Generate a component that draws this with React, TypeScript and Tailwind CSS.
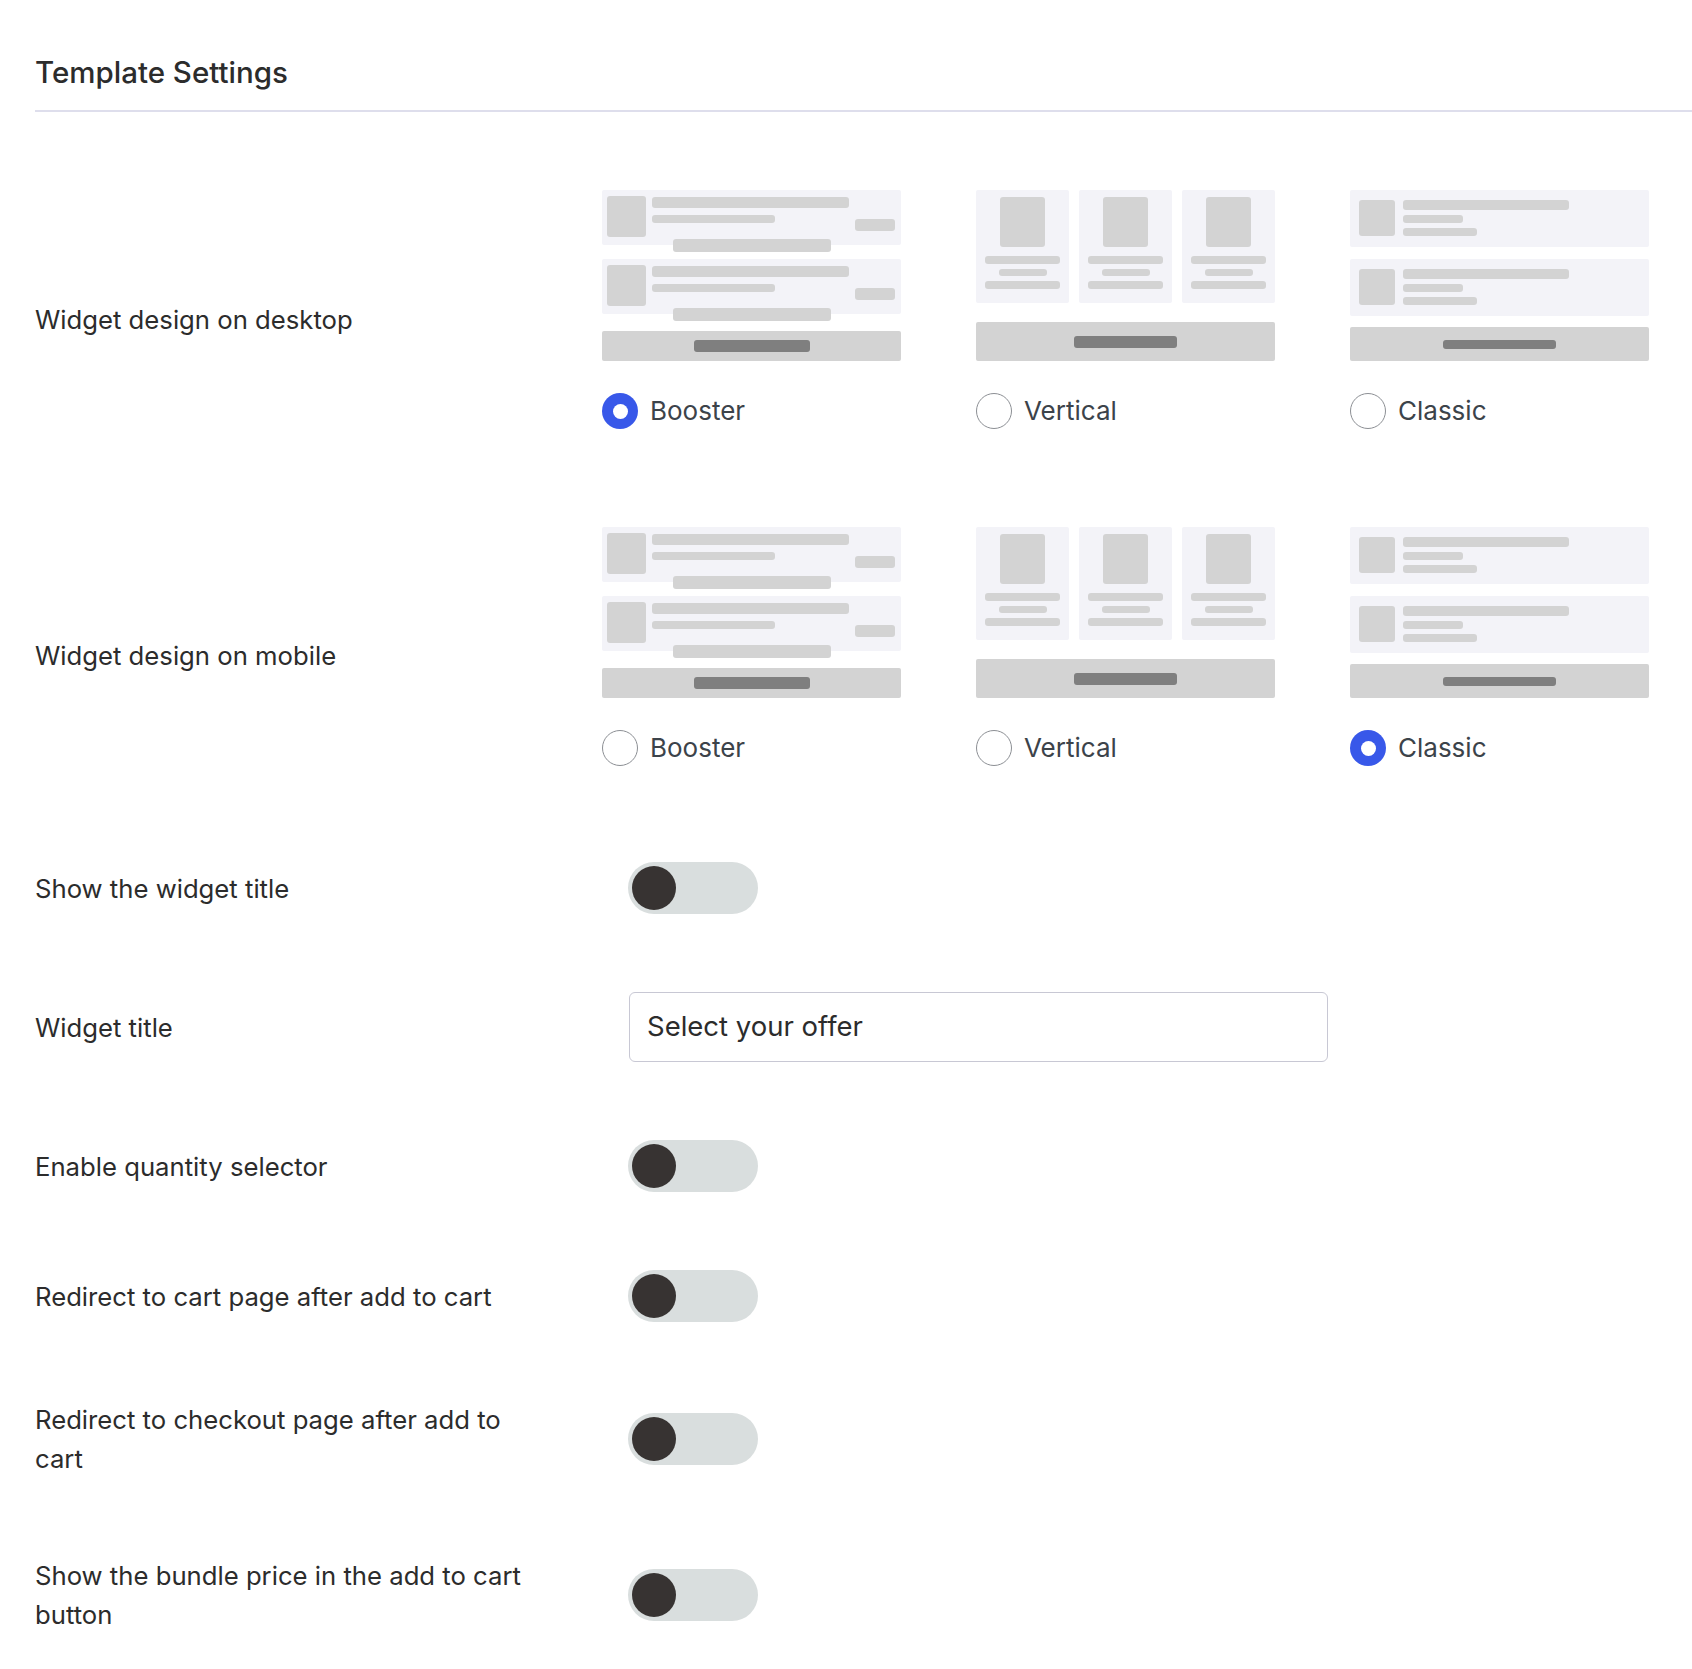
const Bar = ({ className }: { className: string }) => (
  <div className={`rounded-[3px] bg-[#d3d3d3] ${className}`} />
);

const BoosterItem = () => (
  <div className="flex flex-col">
    <div className="flex h-[55px] items-start rounded-[2px] bg-[#f3f3f8] pl-[5px] pt-[6px]">
      <Bar className="h-[41px] w-[39px]" />
      <div className="ml-[6px] flex flex-col pt-[1px]">
        <Bar className="h-[11px] w-[197px]" />
        <Bar className="mt-[7px] h-[8px] w-[123px]" />
      </div>
      <Bar className="ml-auto mr-[6px] mt-[23px] h-[12px] w-[40px]" />
    </div>
    <Bar className="relative mx-auto -mt-[6px] h-[13px] w-[158px]" />
  </div>
);

const BoosterPreview = () => (
  <div className="flex h-[171px] flex-col">
    <BoosterItem />
    <div className="mt-[7px]">
      <BoosterItem />
    </div>
    <div className="mt-[10px] flex h-[30px] items-center justify-center rounded-[2px] bg-[#d3d3d3]">
      <div className="h-[12px] w-[116px] rounded-[3px] bg-[#7f7f7f]" />
    </div>
  </div>
);

const VerticalPreview = () => (
  <div className="flex h-[171px] flex-col">
    <div className="grid h-[113px] grid-cols-3 gap-[10px]">
      {[0, 1, 2].map((i) => (
        <div key={i} className="flex flex-col items-center rounded-[2px] bg-[#f3f3f8] pt-[7px]">
          <Bar className="h-[50px] w-[45px]" />
          <Bar className="mt-[9px] h-[8px] w-[75px]" />
          <Bar className="mt-[5px] h-[7px] w-[48px]" />
          <Bar className="mt-[5px] h-[8px] w-[75px]" />
        </div>
      ))}
    </div>
    <div className="mt-[19px] flex h-[39px] items-center justify-center rounded-[2px] bg-[#d3d3d3]">
      <div className="h-[12px] w-[103px] rounded-[3px] bg-[#7f7f7f]" />
    </div>
  </div>
);

const ClassicItem = () => (
  <div className="flex h-[57px] items-start rounded-[2px] bg-[#f3f3f8] pl-[9px] pt-[10px]">
    <Bar className="h-[36px] w-[36px]" />
    <div className="ml-[8px] flex flex-col">
      <Bar className="h-[10px] w-[166px]" />
      <Bar className="mt-[5px] h-[8px] w-[60px]" />
      <Bar className="mt-[5px] h-[8px] w-[74px]" />
    </div>
  </div>
);

const ClassicPreview = () => (
  <div className="flex h-[171px] flex-col">
    <ClassicItem />
    <div className="mt-[12px]">
      <ClassicItem />
    </div>
    <div className="mt-[11px] flex h-[34px] items-center justify-center rounded-[2px] bg-[#d3d3d3]">
      <div className="h-[9px] w-[113px] rounded-[3px] bg-[#7f7f7f]" />
    </div>
  </div>
);

const Radio = ({ checked, label }: { checked: boolean; label: string }) => (
  <div className="mt-[32px] flex items-center">
    {checked ? (
      <div className="flex h-[36px] w-[36px] items-center justify-center rounded-full bg-[#3858e9]">
        <div className="h-[15px] w-[15px] rounded-full bg-white" />
      </div>
    ) : (
      <div className="h-[36px] w-[36px] rounded-full border-[1.5px] border-[#8c8f94] bg-white" />
    )}
    <span className="ml-[12px] text-[26px] leading-[34px] text-[#3c434a]">{label}</span>
  </div>
);

const DesignPicker = ({ selected, tight }: { selected: string; tight?: boolean }) => (
  <div className={tight ? "flex gap-[75px] pb-[18px]" : "flex gap-[75px] pb-[20px]"}>
    <div className="w-[299px]">
      <BoosterPreview />
      <Radio checked={selected === "Booster"} label="Booster" />
    </div>
    <div className="w-[299px]">
      <VerticalPreview />
      <Radio checked={selected === "Vertical"} label="Vertical" />
    </div>
    <div className="w-[299px]">
      <ClassicPreview />
      <Radio checked={selected === "Classic"} label="Classic" />
    </div>
  </div>
);

const Toggle = () => (
  <div className="ml-[26px] flex h-[52px] w-[130px] items-center rounded-full bg-[#d9dede]">
    <div className="ml-[4px] h-[44px] w-[44px] rounded-full bg-[#373332]" />
  </div>
);

const Row = ({ label, children }: { label: string; children: React.ReactNode }) => (
  <div className="grid grid-cols-[567px_1fr] items-center py-[39px]">
    <div className="pr-[62px] text-[25.7px] leading-[39px] text-[#2c2c2c]">{label}</div>
    <div>{children}</div>
  </div>
);

export default function App() {
  return (
    <div className="min-h-screen bg-white pl-[35px] pt-[54px] font-['Inter','Noto_Sans',sans-serif]">
      <h2 className="text-[29.5px] font-medium leading-[36px] text-[#2c2c2c]">Template Settings</h2>
      <div className="mt-[20px] h-[2px] bg-[#dedeec]" />
      <div className="mt-[39px]">
        <Row label="Widget design on desktop">
          <DesignPicker selected="Booster" />
        </Row>
        <Row label="Widget design on mobile">
          <DesignPicker selected="Classic" tight />
        </Row>
        <Row label="Show the widget title">
          <Toggle />
        </Row>
        <Row label="Widget title">
          <div className="ml-[27px] flex h-[70px] w-[699px] items-center rounded-[6px] border-[1.5px] border-[#c8c8d4] px-[17px] text-[27.5px] text-[#2c2c2c]">
            Select your offer
          </div>
        </Row>
        <Row label="Enable quantity selector">
          <Toggle />
        </Row>
        <Row label="Redirect to cart page after add to cart">
          <Toggle />
        </Row>
        <Row label="Redirect to checkout page after add to cart">
          <Toggle />
        </Row>
        <Row label="Show the bundle price in the add to cart button">
          <Toggle />
        </Row>
      </div>
    </div>
  );
}
